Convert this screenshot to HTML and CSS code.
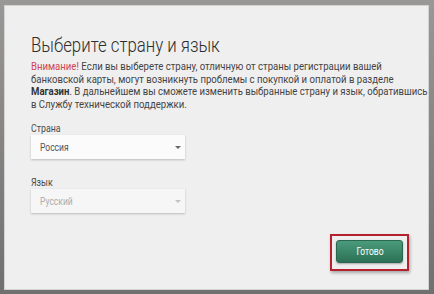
FILE: index.html
```html
<!DOCTYPE html>
<html lang="ru">
<head>
<meta charset="utf-8">
<link rel="stylesheet" href="styles.css">
</head>
<body>
<div class="backdrop">
  <div class="dialog">
    <h1 class="title"><span class="nar">Выберите страну и язык</span></h1>
    <p class="note"><span class="nar"><span class="warn">Внимание!</span> Если вы выберете страну, отличную от страны регистрации вашей<br>банковской карты, могут возникнуть проблемы с покупкой и оплатой в разделе<br><b>Магазин</b>. В дальнейшем вы сможете изменить выбранные страну и язык, обратившись<br>в Службу технической поддержки.</span></p>
    <div class="field">
      <div class="label"><span class="nar">Страна</span></div>
      <div class="select"><span class="nar">Россия</span><i class="arrow"></i></div>
    </div>
    <div class="field second">
      <div class="label"><span class="nar">Язык</span></div>
      <div class="select disabled"><span class="nar">Русский</span><i class="arrow"></i></div>
    </div>
    <div class="actions">
      <div class="highlight"><button class="btn"><span class="nar mid">Готово</span></button></div>
    </div>
  </div>
</div>
</body>
</html>
```
FILE: styles.css
```css
html, body { margin: 0; padding: 0; }
body {
  width: 434px; height: 294px; overflow: hidden;
  background: linear-gradient(180deg, #9a9896 0px, #8a8784 40%, #707070 100%);
}
.backdrop { padding: 5px 5px 4px 4px; }
.dialog {
  box-sizing: border-box;
  height: 285px;
  background: #efefef;
  border: 1px solid #d2d2d2;
  padding: 26px 19px 0 26px;
  display: flex; flex-direction: column;
  overflow: hidden;
  font-family: Roboto, "Liberation Sans", sans-serif;
  color: #3a3a3a;
}
.nar {
  display: inline-block;
  white-space: nowrap;
  transform: scaleX(0.85);
  transform-origin: left center;
}
.nar.mid { transform-origin: center center; }
.title {
  margin: 0;
  font-weight: 300;
  font-size: 20px;
  line-height: 26px;
  color: #2e2e2e;
}
.title .nar { transform: scaleX(0.84); }
.note {
  margin: 3px 0 0;
  font-size: 11px;
  line-height: 12.5px;
  color: #444;
}
.note .nar { transform: scaleX(0.87); }
.note b { font-weight: bold; color: #333; }
.warn { color: #d2434f; }
.field { margin-top: 12px; }
.field.second { margin-top: 18px; }
.label { font-size: 11px; line-height: 12px; color: #4a4a4a; }
.label .nar { transform: scaleX(0.8); }
.select {
  width: 154px; height: 24px; box-sizing: border-box;
  background: #fbfbfb;
  box-shadow: 0 1px 2px rgba(0,0,0,0.22);
  display: flex; align-items: center; justify-content: space-between;
  padding: 0 4px 0 9px;
  font-size: 10px; color: #555;
}
.select.disabled { color: #adadad; background: #f6f6f6; }
.arrow {
  width: 0; height: 0;
  border-left: 3px solid transparent; border-right: 3px solid transparent;
  border-top: 3px solid #666;
}
.select.disabled .arrow { border-top-color: #c2c2c2; }
.actions { margin-top: auto; margin-bottom: 18px; display: flex; justify-content: flex-end; }
.highlight {
  border: 2px solid #b3222d;
  padding: 4px 4px 6px 4px;
  box-shadow: 1px 2px 3px rgba(0,0,0,0.3);
}
.btn {
  display: flex; align-items: center; justify-content: center;
  width: 67px; height: 23px;
  border: 1px solid #2a6650; border-radius: 3px;
  background: linear-gradient(#4a9b7b, #2c7157);
  color: #fff;
  font-family: Roboto, "Liberation Sans", sans-serif;
  font-size: 10px;
  padding: 0;
  box-shadow: 0 1px 2px rgba(0,0,0,0.3);
}
```
